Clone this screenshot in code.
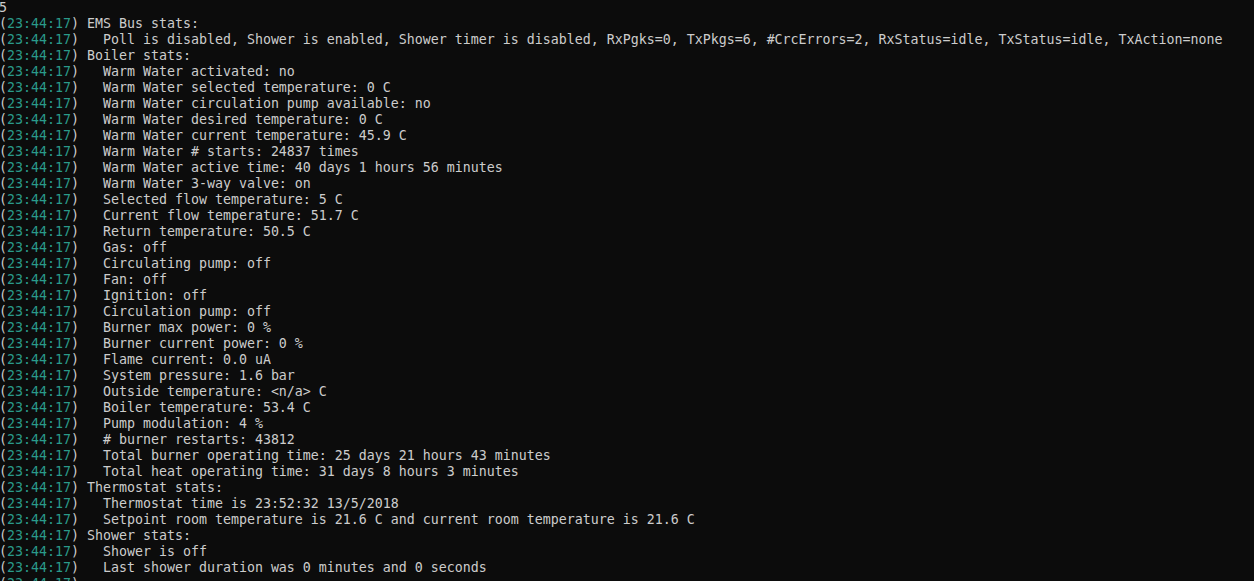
import React from "react";

const lines: string[] = [
  "EMS Bus stats:",
  "  Poll is disabled, Shower is enabled, Shower timer is disabled, RxPgks=0, TxPkgs=6, #CrcErrors=2, RxStatus=idle, TxStatus=idle, TxAction=none",
  "Boiler stats:",
  "  Warm Water activated: no",
  "  Warm Water selected temperature: 0 C",
  "  Warm Water circulation pump available: no",
  "  Warm Water desired temperature: 0 C",
  "  Warm Water current temperature: 45.9 C",
  "  Warm Water # starts: 24837 times",
  "  Warm Water active time: 40 days 1 hours 56 minutes",
  "  Warm Water 3-way valve: on",
  "  Selected flow temperature: 5 C",
  "  Current flow temperature: 51.7 C",
  "  Return temperature: 50.5 C",
  "  Gas: off",
  "  Circulating pump: off",
  "  Fan: off",
  "  Ignition: off",
  "  Circulation pump: off",
  "  Burner max power: 0 %",
  "  Burner current power: 0 %",
  "  Flame current: 0.0 uA",
  "  System pressure: 1.6 bar",
  "  Outside temperature: <n/a> C",
  "  Boiler temperature: 53.4 C",
  "  Pump modulation: 4 %",
  "  # burner restarts: 43812",
  "  Total burner operating time: 25 days 21 hours 43 minutes",
  "  Total heat operating time: 31 days 8 hours 3 minutes",
  "Thermostat stats:",
  "  Thermostat time is 23:52:32 13/5/2018",
  "  Setpoint room temperature is 21.6 C and current room temperature is 21.6 C",
  "Shower stats:",
  "  Shower is off",
  "  Last shower duration was 0 minutes and 0 seconds",
  "",
];

export default function App() {
  return (
    <div className="w-[1254px] h-[581px] overflow-hidden bg-[#0c0c0c] text-[#cccccc]">
      <div
        className="ml-[-1px] text-[13.29px] leading-[16px] whitespace-pre"
        style={{ fontFamily: '"DejaVu Sans Mono", "Liberation Mono", monospace' }}
      >
        <div className="h-[16px]">5</div>
        {lines.map((l, i) => (
          <div key={i} className="h-[16px]">
            (<span className="text-[#2a9a8a]">23:44:17</span>) {l}
          </div>
        ))}
      </div>
    </div>
  );
}
